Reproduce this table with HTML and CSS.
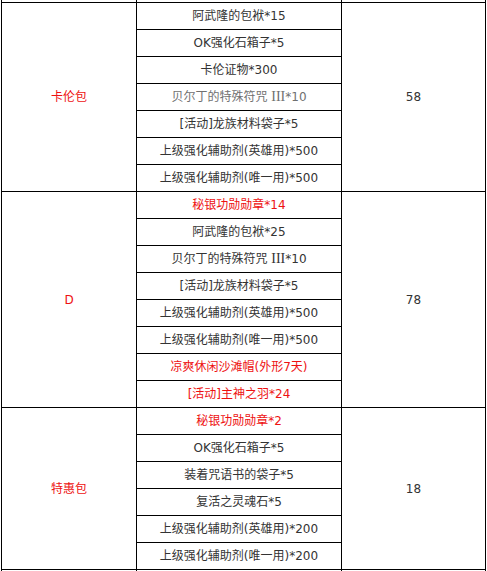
FILE: index.html
```html
<!DOCTYPE html>
<html lang="zh-CN">
<head>
<meta charset="utf-8">
<title>礼包</title>
<link rel="stylesheet" href="styles.css">
</head>
<body>
<table class="pack">
  <colgroup><col class="c1"><col class="c2"><col class="c3"></colgroup>
  <tr class="cut top"><td></td><td></td><td></td></tr>
  <tr><td rowspan="7" class="name red">卡伦包</td><td>阿武隆的包袱*15</td><td rowspan="7" class="price">58</td></tr>
  <tr><td>OK强化石箱子*5</td></tr>
  <tr><td>卡伦证物*300</td></tr>
  <tr><td class="gray">贝尔丁的特殊符咒 <span class="roman">III</span>*10</td></tr>
  <tr><td>[活动]龙族材料袋子*5</td></tr>
  <tr><td>上级强化辅助剂(英雄用)*500</td></tr>
  <tr><td>上级强化辅助剂(唯一用)*500</td></tr>
  <tr><td rowspan="8" class="name red">D</td><td class="red">秘银功勋勋章*14</td><td rowspan="8" class="price">78</td></tr>
  <tr><td>阿武隆的包袱*25</td></tr>
  <tr><td>贝尔丁的特殊符咒 <span class="roman">III</span>*10</td></tr>
  <tr><td>[活动]龙族材料袋子*5</td></tr>
  <tr><td>上级强化辅助剂(英雄用)*500</td></tr>
  <tr><td>上级强化辅助剂(唯一用)*500</td></tr>
  <tr><td class="red">凉爽休闲沙滩帽(外形7天)</td></tr>
  <tr><td class="red">[活动]主神之羽*24</td></tr>
  <tr><td rowspan="6" class="name red">特惠包</td><td class="red">秘银功勋勋章*2</td><td rowspan="6" class="price">18</td></tr>
  <tr><td>OK强化石箱子*5</td></tr>
  <tr><td>装着咒语书的袋子*5</td></tr>
  <tr><td>复活之灵魂石*5</td></tr>
  <tr><td>上级强化辅助剂(英雄用)*200</td></tr>
  <tr><td>上级强化辅助剂(唯一用)*200</td></tr>
  <tr class="cut bottom"><td></td><td></td><td></td></tr>
</table>
</body>
</html>
```
FILE: styles.css
```css
html, body {
  margin: 0;
  padding: 0;
  background: #fff;
  overflow: hidden;
}
body {
  height: 571px;
}
.pack {
  border-collapse: collapse;
  table-layout: fixed;
  margin-left: 1px;
  font-family: "DejaVu Sans", "Noto Sans CJK SC", sans-serif;
  font-size: 12px;
  color: #333;
}
.c1 { width: 135px; }
.c2 { width: 205px; }
.c3 { width: 144px; }
.pack td {
  border: 1px solid #000;
  padding: 0;
  height: 26px;
  text-align: center;
  vertical-align: middle;
  line-height: 16px;
  white-space: nowrap;
}
.pack .cut td {
  height: 2px;
  font-size: 0;
  line-height: 0;
}
.pack .cut.top td { border-top: none; }
.pack .cut.bottom td { border-bottom: none; height: 10px; }
.pack .red { color: #ee1111; }
.pack .gray { color: #707070; }
.roman {
  font-family: "Liberation Serif", "DejaVu Serif", serif;
  font-size: 14px;
  line-height: 12px;
}
.price { color: #333; }
```
